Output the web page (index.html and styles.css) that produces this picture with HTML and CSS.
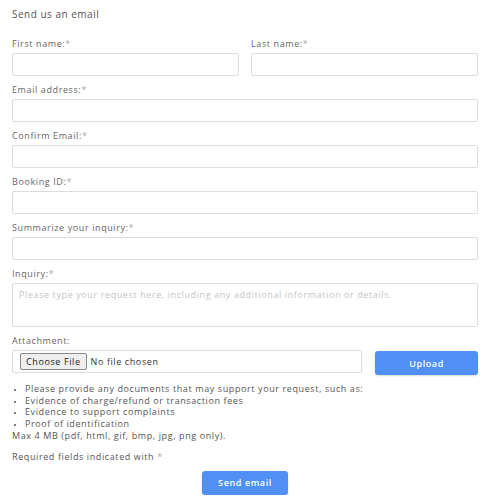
FILE: index.html
```html
<!DOCTYPE html>
<html>
<head>
<meta charset="utf-8">
<link rel="stylesheet" href="styles.css">
</head>
<body>
<form class="form">
  <h2 class="title">Send us an email</h2>
  <div class="row">
    <div class="field">
      <label class="label">First name:<span class="req">*</span></label>
      <input class="input" type="text">
    </div>
    <div class="field">
      <label class="label">Last name:<span class="req">*</span></label>
      <input class="input" type="text">
    </div>
  </div>
  <div class="field">
    <label class="label">Email address:<span class="req">*</span></label>
    <input class="input" type="text">
  </div>
  <div class="field">
    <label class="label">Confirm Email:<span class="req">*</span></label>
    <input class="input" type="text">
  </div>
  <div class="field">
    <label class="label">Booking ID:<span class="req">*</span></label>
    <input class="input" type="text">
  </div>
  <div class="field">
    <label class="label">Summarize your inquiry:<span class="req">*</span></label>
    <input class="input" type="text">
  </div>
  <div class="field">
    <label class="label">Inquiry:<span class="req">*</span></label>
    <textarea class="textarea" placeholder="Please type your request here, including any additional information or details."></textarea>
  </div>
  <div class="field">
    <label class="label">Attachment:</label>
    <div class="attach">
      <div class="filebox">
        <span class="filebtn">Choose File</span>
        <span class="filetext">No file chosen</span>
      </div>
      <button type="button" class="btn upload">Upload</button>
    </div>
  </div>
  <ul class="notes">
    <li>Please provide any documents that may support your request, such as:</li>
    <li>Evidence of charge/refund or transaction fees</li>
    <li>Evidence to support complaints</li>
    <li>Proof of identification</li>
  </ul>
  <p class="max">Max 4 MB (pdf, html, gif, bmp, jpg, png only).</p>
  <p class="required">Required fields indicated with <span class="req">*</span></p>
  <div class="actions">
    <button type="button" class="btn send">Send email</button>
  </div>
</form>
</body>
</html>
```
FILE: styles.css
```css
html, body {
  margin: 0;
  padding: 0;
  background: #fff;
}
body {
  font-family: "Open Sans", "Liberation Sans", sans-serif;
  color: #555;
  font-size: 9px;
  letter-spacing: 0.6px;
}
.form {
  width: 466px;
  padding: 7px 0 0 12px;
}
.title {
  margin: 0 0 17px;
  font-size: 10px;
  line-height: 14px;
  font-weight: 400;
  letter-spacing: 0.5px;
  color: #555;
}
.row {
  display: flex;
  gap: 12px;
}
.row .field {
  flex: 1;
}
.field {
  display: flex;
  flex-direction: column;
  margin-bottom: 8px;
}
.label {
  font-size: 9px;
  line-height: 12px;
  color: #666;
  margin-bottom: 3px;
}
.req {
  color: #aaa;
}
.input, .textarea {
  box-sizing: border-box;
  width: 100%;
  height: 23px;
  border: 1px solid #ddd;
  border-radius: 2px;
  margin: 0;
  background: #fff;
  font-family: inherit;
}
.textarea {
  height: 44px;
  resize: none;
  padding: 5px 6px;
  font-size: 9px;
  letter-spacing: 0.6px;
  line-height: 11px;
}
.textarea::placeholder {
  color: #c4c4c4;
}
.attach {
  display: flex;
  gap: 13px;
  align-items: flex-start;
}
.filebox {
  box-sizing: border-box;
  width: 350px;
  height: 23px;
  border: 1px solid #ddd;
  border-radius: 2px;
  display: flex;
  align-items: center;
  padding-left: 7px;
  gap: 4px;
}
.filebtn {
  box-sizing: border-box;
  height: 17px;
  padding: 0 5px;
  border: 1px solid #8a8a8a;
  border-radius: 2px;
  background: #efefef;
  color: #222;
  font-size: 9px;
  line-height: 15px;
}
.filetext {
  color: #333;
  font-size: 9px;
}
.btn {
  border: none;
  border-radius: 3px;
  background: #5090f5;
  color: #fff;
  font-family: inherit;
  font-size: 9px;
  letter-spacing: 0.6px;
  font-weight: 600;
  height: 24px;
  padding: 0;
  box-shadow: 0 1px 2px rgba(0,0,0,0.15);
}
.upload {
  width: 103px;
  margin-top: 1px;
}
.notes {
  margin: 2px 0 0;
  padding-left: 13px;
  list-style: disc;
  font-size: 9px;
  line-height: 11.7px;
  color: #555;
}
.notes li::marker {
  font-size: 7px;
}
.max {
  margin: 0;
  font-size: 9px;
  line-height: 11.7px;
}
.required {
  margin: 9px 0 0;
  font-size: 9px;
  line-height: 12px;
}
.actions {
  display: flex;
  justify-content: center;
  margin-top: 8px;
}
.send {
  width: 86px;
}
```
